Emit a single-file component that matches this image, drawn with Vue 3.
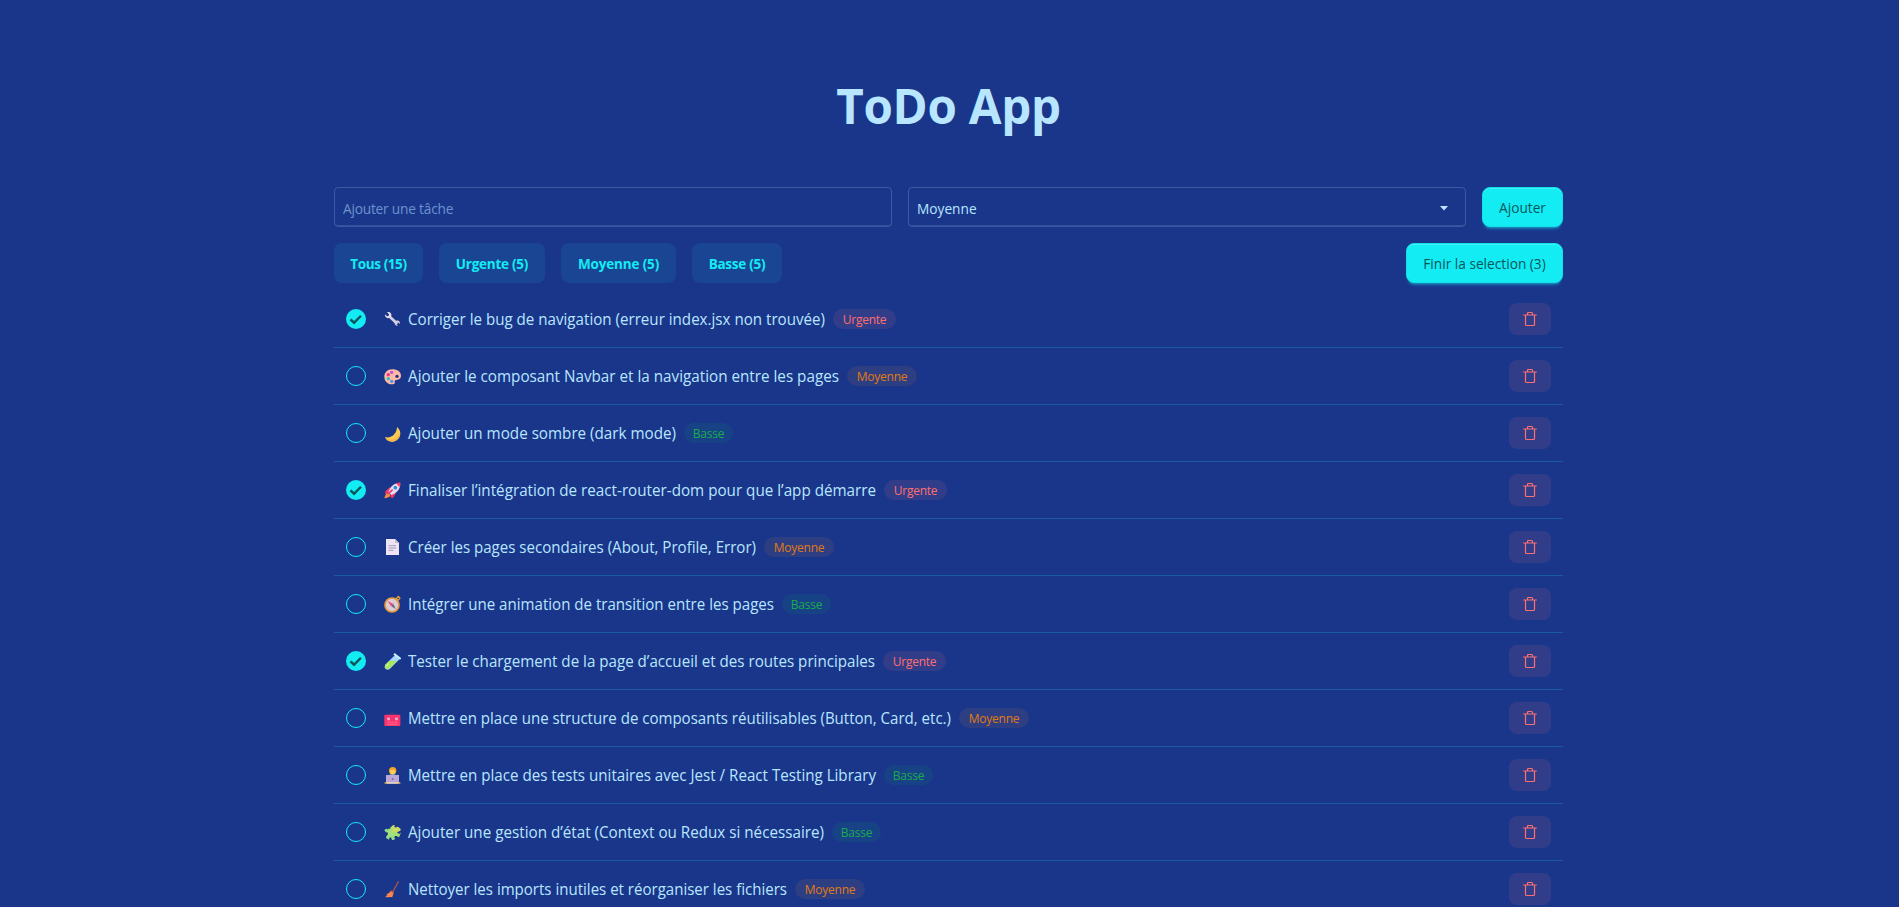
<script setup>
const filters = [
  { name: 'Tous', count: 15, size: 'tous' },
  { name: 'Urgente', count: 5, size: 'urgente' },
  { name: 'Moyenne', count: 5, size: 'moyenne' },
  { name: 'Basse', count: 5, size: 'basse' },
]

const todos = [
  { icon: 'wrench', text: 'Corriger le bug de navigation (erreur index.jsx non trouvée)', priority: 'Urgente', done: true, width: 417 },
  { icon: 'palette', text: 'Ajouter le composant Navbar et la navigation entre les pages', priority: 'Moyenne', done: false, width: 431 },
  { icon: 'moon', text: 'Ajouter un mode sombre (dark mode)', priority: 'Basse', done: false, width: 268 },
  { icon: 'rocket', text: 'Finaliser l’intégration de react-router-dom pour que l’app démarre', priority: 'Urgente', done: true, width: 468 },
  { icon: 'page', text: 'Créer les pages secondaires (About, Profile, Error)', priority: 'Moyenne', done: false, width: 348 },
  { icon: 'compass', text: 'Intégrer une animation de transition entre les pages', priority: 'Basse', done: false, width: 366 },
  { icon: 'tube', text: 'Tester le chargement de la page d’accueil et des routes principales', priority: 'Urgente', done: true, width: 467 },
  { icon: 'toolbox', text: 'Mettre en place une structure de composants réutilisables (Button, Card, etc.)', priority: 'Moyenne', done: false, width: 543 },
  { icon: 'coder', text: 'Mettre en place des tests unitaires avec Jest / React Testing Library', priority: 'Basse', done: false, width: 468 },
  { icon: 'puzzle', text: 'Ajouter une gestion d’état (Context ou Redux si nécessaire)', priority: 'Basse', done: false, width: 416 },
  { icon: 'broom', text: 'Nettoyer les imports inutiles et réorganiser les fichiers', priority: 'Moyenne', done: false, width: 379 },
]
</script>

<template>
  <main class="page">
    <h1 class="title">ToDo App</h1>

    <div class="form">
      <div class="field placeholder">Ajouter une tâche</div>
      <div class="field select">
        <span>Moyenne</span>
        <svg width="8" height="5" viewBox="0 0 8 5"><path d="M0 0h8L4 4.6z" fill="currentColor" /></svg>
      </div>
      <button class="btn primary add">Ajouter</button>
    </div>

    <div class="toolbar">
      <div class="filters">
        <button v-for="f in filters" :key="f.name" class="btn soft" :class="f.size">{{ f.name }} ({{ f.count }})</button>
      </div>
      <button class="btn primary finish">Finir la selection (3)</button>
    </div>

    <ul class="list">
      <li v-for="t in todos" :key="t.text" class="row">
        <span class="check" :class="{ checked: t.done }">
          <svg v-if="t.done" width="20" height="20" viewBox="0 0 20 20">
            <path d="M3.6 11.2l1.8-1.7 2.7 2.4 6-5.9 1.7 1.6-7.7 7.8z" fill="currentColor" />
          </svg>
        </span>

        <svg class="emoji" viewBox="0 0 51 54">
          <g v-if="t.icon === 'wrench'">
            <path d="M14 17l26 24" stroke="#d9d0e8" stroke-width="8" />
            <path d="M9 7l6 6-1 5-5 1-6-6c-1 8 5 13 12 11l7-6c2-8-5-14-13-11z" fill="#e6dff0" />
            <path d="M32 37c-1 7 4 12 10 10l-5-5 1-4 4-1 5 5c3-7-4-12-10-10z" fill="#d6cce3" />
          </g>
          <g v-else-if="t.icon === 'palette'">
            <path d="M25 7C10 7 1 17 1 29s9 23 22 23c8 0 11-3 9-8-1-4 3-6 9-6 6-1 10-5 10-12C51 15 40 7 25 7z" fill="#ffb9a4" />
            <circle cx="39" cy="28" r="5" fill="#1a368b" />
            <circle cx="23" cy="16" r="5" fill="#bb4fe0" />
            <circle cx="13" cy="23" r="5" fill="#f4318d" />
            <circle cx="13" cy="35" r="5" fill="#25c4b5" />
            <circle cx="23" cy="43" r="5" fill="#4b91f0" />
          </g>
          <g v-else-if="t.icon === 'moon'">
            <path d="M39 9c18 14 10 42-12 44C14 54 6 48 3 39c18 6 36-10 36-30z" fill="#ffca50" />
            <path d="M6 42c14 10 33 5 42-13-2 14-11 23-23 24-9 0-15-4-19-11z" fill="#f7b252" />
          </g>
          <g v-else-if="t.icon === 'rocket'">
            <path d="M1 50l6-14 10 2 2 8-13 6z" fill="#ff873d" />
            <path d="M18 18L4 31v8l12-3zm18 18l-9 15-8-2 3-12z" fill="#f43566" />
            <path d="M46 7c-19-1-29 14-33 27l9 8c14-5 27-17 27-34z" fill="#e6dcf2" />
            <path d="M36 7l13-3-2 15z" fill="#ff3967" />
            <circle cx="34" cy="20" r="5.5" fill="#3788d7" />
            <path d="M14 37l12-11" stroke="#f43566" stroke-width="5" />
          </g>
          <g v-else-if="t.icon === 'page'">
            <path d="M6 3h27l12 12v36H6z" fill="#eee4f5" />
            <path d="M33 3v12h12z" fill="#c9bad7" />
            <path d="M14 23h22M14 30h22M14 37h14" stroke="#998ca9" stroke-width="2.5" />
          </g>
          <g v-else-if="t.icon === 'compass'">
            <path d="M37 10l6-6 5 6-6 6z" fill="none" stroke="#e4a13c" stroke-width="3.5" />
            <circle cx="24" cy="30" r="21" fill="#dccbd8" stroke="#e89b3b" stroke-width="5" />
            <path d="M11 18l17 9-7 6z" fill="#f3426c" />
            <path d="M35 42l-7-15-7 6z" fill="#70617e" />
          </g>
          <g v-else-if="t.icon === 'tube'">
            <path d="M34 8l13 13-29 29c-5 5-12 3-15-1-2-4-1-8 2-12z" fill="#a6d8fa" />
            <path d="M15 27h24L18 48c-5 5-12 3-14-1-2-3-1-7 2-10z" fill="#a8e75d" />
            <path d="M30 5l20 16" stroke="#c8edff" stroke-width="6" />
            <path d="M13 35L8 42" stroke="#e4ff9d" stroke-width="3" />
          </g>
          <g v-else-if="t.icon === 'toolbox'">
            <path d="M17 17v-2q0-3 4-3h8q4 0 4 3v2" fill="none" stroke="#45406f" stroke-width="3" />
            <rect x="1" y="17" width="48" height="34" rx="3" fill="#fb346d" />
            <path d="M1 29h48" stroke="#dd2f6c" stroke-width="2" />
            <path d="M9 26h9v5l-4 4-5-4zm24 0h9v5l-4 4-5-4z" fill="#e0b4d6" />
            <path d="M10 40h31M10 46h31" stroke="#f879a5" stroke-width="2" />
          </g>
          <g v-else-if="t.icon === 'coder'">
            <path d="M10 34q1-9 15-10 15 1 17 10z" fill="#4a97dd" />
            <circle cx="26" cy="14" r="11" fill="#f5a52f" />
            <path d="M18 13l12-2 4 5c0 13-16 13-16 0z" fill="#ffd04f" />
            <path d="M6 27h39v24H6z" fill="#b9a7d8" />
            <circle cx="26" cy="39" r="3" fill="#83699e" />
            <path d="M2 51h47" stroke="#ffcf49" stroke-width="4" />
            <path d="M9 51h33" stroke="#dcd2ec" stroke-width="4" />
          </g>
          <g v-else-if="t.icon === 'puzzle'">
            <path d="M14 16l11-7 2 0 0 5 6-1 1-5 12 6-4 9-4 3 3 5 10-2-6 14-9-4-3 0-2 4 3 5-9 3-4-8-5 1-1 6-9-6 4-8-1-5-4-2z" fill="#a3e075" />
            <circle cx="29" cy="11" r="5" fill="#d6db66" />
            <circle cx="45" cy="20" r="5" fill="#d6db66" />
            <circle cx="7" cy="22" r="5" fill="#8bdc91" />
            <circle cx="12" cy="42" r="5" fill="#8bdc91" />
            <circle cx="27" cy="47" r="4" fill="#8bdc91" />
            <path d="M26 10l18 3 2 11-9 6-13-6z" fill="#c9dd68" />
            <circle cx="35" cy="10" r="3.5" fill="#1a368b" />
            <circle cx="46" cy="29" r="3.5" fill="#1a368b" />
            <circle cx="36" cy="43" r="4" fill="#1a368b" />
            <circle cx="8" cy="32" r="4" fill="#1a368b" />
            <circle cx="16" cy="14" r="3.5" fill="#1a368b" />
          </g>
          <g v-else>
            <path d="M43 5L26 36" stroke="#a15549" stroke-width="4" stroke-linecap="round" />
            <path d="M20 33l9 5-4 13-19 1-1-4 6-2-4-3q9-2 13-10z" fill="#ff874e" />
            <path d="M21 31l9 5-2 4-9-5z" fill="#d15b47" />
          </g>
        </svg>

        <svg class="label" :width="t.width" height="24">
          <text x="0" y="17.5" :textLength="t.width" lengthAdjust="spacingAndGlyphs">{{ t.text }}</text>
        </svg>
        <span class="badge" :class="t.priority.toLowerCase()">{{ t.priority }}</span>

        <button class="btn trash" aria-label="Supprimer">
          <svg width="16" height="16" viewBox="0 0 16 16" fill="none" stroke="currentColor" stroke-width="1.2" stroke-linejoin="round">
            <path d="M1.2 4h13.6M3.5 4v9.5q0 1 1 1h7q1 0 1-1V4M5.5 4V2.4q0-.9.9-.9h3.2q.9 0 .9.9V4" />
          </svg>
        </button>
      </li>
    </ul>
  </main>
</template>

<style>
html,
body {
  height: 100%;
  overflow: hidden;
  background: #1a368b;
}
</style>

<style scoped>
.page {
  width: 1229px;
  height: 907px;
  margin-left: 334px;
  overflow: hidden;
  color: #b8e6fe;
  font-family: "Open Sans", "Noto Sans", sans-serif;
}
.title {
  margin: 82px 0 57px;
  height: 48px;
  line-height: 48px;
  text-align: center;
  font-size: 47.5px;
  font-weight: 700;
  letter-spacing: -0.25px;
}
.form {
  display: flex;
  gap: 16px;
}
.field {
  box-sizing: border-box;
  width: 558px;
  display: flex;
  align-items: center;
  height: 40px;
  padding: 2px 8px 0;
  border: 1px solid #3a59a2;
  border-radius: 4px;
  box-shadow: inset 0 -1px #314f9a;
  font-size: 13.7px;
  letter-spacing: -0.2px;
}
.placeholder {
  color: #6c93cb;
}
.select {
  justify-content: space-between;
  padding-right: 17px;
  letter-spacing: 0;
}
.btn {
  box-sizing: border-box;
  display: flex;
  align-items: center;
  justify-content: center;
  height: 40px;
  padding: 2px 0 0;
  border: 0;
  border-radius: 8px;
  font-family: inherit;
  font-size: 13.7px;
  white-space: nowrap;
}
.primary {
  border: 1px solid #12dfe7;
  padding-top: 1px;
  background: #13ecf3;
  color: #07565a;
  font-weight: 500;
  box-shadow: inset 0 1px #3ff2f7, 0 3px 2px -2px #13ecf34d, 0 4px 3px -2px #13ecf34d;
}
.add {
  width: 81px;
}
.finish {
  width: 157px;
}
.toolbar {
  display: flex;
  justify-content: space-between;
  margin-top: 16px;
}
.filters {
  display: flex;
  gap: 16px;
}
.soft {
  background: #1a4593;
  color: #13ecf3;
  font-weight: 700;
  font-size: 13.5px;
  letter-spacing: -0.4px;
}
.soft.tous {
  width: 89px;
}
.soft.urgente {
  width: 106px;
  letter-spacing: -0.25px;
}
.soft.moyenne {
  width: 115px;
  letter-spacing: -0.15px;
}
.soft.basse {
  width: 90px;
  letter-spacing: -0.25px;
}
.list {
  margin: 8px 0 0;
  padding: 0;
  list-style: none;
}
.row {
  box-sizing: border-box;
  display: flex;
  align-items: center;
  height: 57px;
  padding: 0 12px;
  border-bottom: 1px solid #195aa0;
}
.check {
  box-sizing: border-box;
  width: 20px;
  height: 20px;
  border: 1px solid #13ecf3;
  border-radius: 50%;
}
.check.checked {
  border: 0;
  background: #13ecf3;
  color: #07565a;
}
.check svg {
  display: block;
}
.emoji {
  width: 17px;
  height: 18px;
  margin-left: 18px;
}
.label {
  margin-left: 7px;
  overflow: visible;
}
.label text {
  fill: #b8e6fe;
  font-size: 15.7px;
}
.badge {
  box-sizing: border-box;
  height: 20px;
  margin-left: 8px;
  padding-top: 1px;
  border-radius: 10px;
  line-height: 20px;
  text-align: center;
  font-size: 12px;
  letter-spacing: -0.25px;
}
.badge.urgente {
  width: 63px;
  background: #313d89;
  color: #ff6f70;
}
.badge.moyenne {
  width: 70px;
  background: #2d3e83;
  color: #e07a14;
}
.badge.basse {
  width: 49px;
  background: #184286;
  color: #18ab4d;
}
.trash {
  width: 42px;
  height: 32px;
  margin-left: auto;
  padding: 0;
  background: #313d89;
  color: #ff6f70;
}
</style>
